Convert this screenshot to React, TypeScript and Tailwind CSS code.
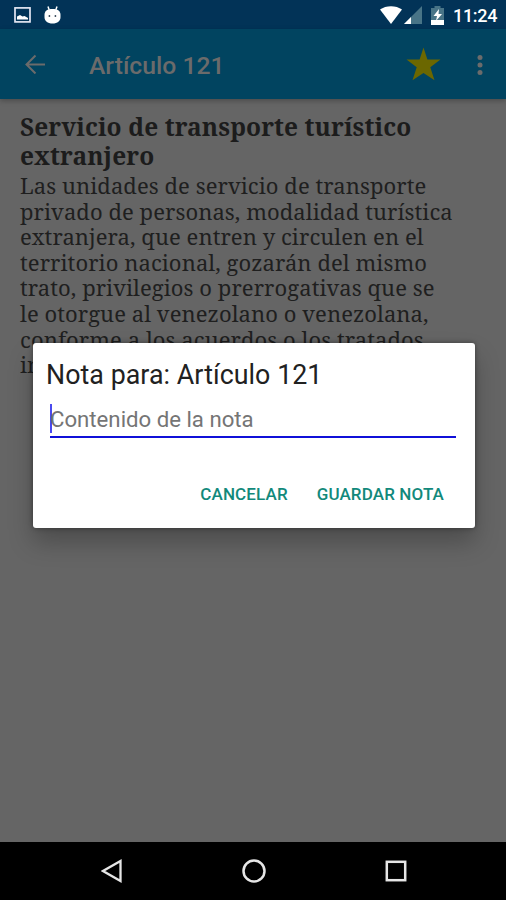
import React from "react";

const articleTitle = ["Servicio de transporte turístico", "extranjero"];

const articleLines = [
  "Las unidades de servicio de transporte",
  "privado de personas, modalidad turística",
  "extranjera, que entren y circulen en el",
  "territorio nacional, gozarán del mismo",
  "trato, privilegios o prerrogativas que se",
  "le otorgue al venezolano o venezolana,",
  "conforme a los acuerdos o los tratados",
  "internacionales.",
];

const StatusBar: React.FC = () => {
  return (
    <div className="flex h-[29px] shrink-0 items-center justify-between bg-[#023357] pl-[14px] pr-[9px] text-white">
      <div className="flex items-center gap-[13px]">
        <svg width="17" height="17" viewBox="0 0 17 17" fill="none">
          <rect x="1" y="1.9" width="15" height="14" stroke="#e3e6f2" strokeWidth="1.7" />
          <path d="M3 13.500V10.500l3-1.500 2.500 1.500 2-.5 3.500 2v1.500z" fill="#fff" />
        </svg>
        <svg width="17" height="18" viewBox="0 0 17 18">
          <path d="M4 0.500l1.200 3.500M13 0.500l-1.200 3.500" stroke="#fff" strokeWidth="1.500" />
          <path d="M0.500 9C0.500 5 3 3 8.500 3S16.500 5 16.500 9v2c0 4-3 6.500-8 6.500S0.500 15 0.500 11z" fill="#fff" />
          <circle cx="5.400" cy="10" r="0.900" fill="#345" />
          <circle cx="11.400" cy="10" r="0.900" fill="#345" />
        </svg>
      </div>
      <div className="flex items-center">
        <svg className="mt-[1px]" width="22" height="18" viewBox="0 0 22 18">
          <path d="M0 3.500C6-1 16-1 22 3.500L11 18z" fill="#fff" />
        </svg>
        <svg className="ml-[2px] mt-[1px]" width="18" height="18" viewBox="0 0 18 18">
          <path d="M18 0v18H0z" fill="#487487" />
          <path d="M7 11v7H0z" fill="#fff" />
        </svg>
        <svg className="ml-[9px] mt-[1px]" width="13" height="19" viewBox="0 0 13 19">
          <path d="M3.500 0h6v2H13v12H0V2h3.500z" fill="#487487" />
          <path d="M0 14h13v5H0z" fill="#fff" />
          <path d="M8 3L2.500 10H6l-1 5 6-7H7.500z" fill="#fff" />
        </svg>
        <span className="ml-[9px] mt-[2px] w-[44px] whitespace-nowrap text-[18px] font-medium leading-none tracking-[-0.300px]">
          11:24
        </span>
      </div>
    </div>
  );
};

const AppBar: React.FC = () => {
  return (
    <div className="flex h-[70px] shrink-0 items-center bg-[#014460] pl-[25px] pr-[23px] shadow-[0_2px_5px_rgba(0,0,0,0.25)]">
      <svg width="20" height="20" viewBox="0 0 20 20" fill="none" stroke="#6b6b6b" strokeWidth="2">
        <path d="M20 10.500H2M10.500 1.500L1.500 10.500l9 9" />
      </svg>
      <h1 className="ml-[44px] mt-[4px] text-[24.700px] font-medium leading-none text-[#6b6b6b]">
        Artículo 121
      </h1>
      <svg className="ml-auto" width="35" height="34" viewBox="0 0 35 34">
        <path
          d="M17.500 0.500l3.900 12H34.500L24.300 20.300l4.200 13L17.500 26l-11 7.300 4.200-13L0.500 12.500h13.100z"
          fill="#6b6700"
        />
      </svg>
      <svg className="ml-[36px] mt-[1px]" width="6" height="22" viewBox="0 0 6 22" fill="#6b6b6b">
        <circle cx="3" cy="3.400" r="2.500" />
        <circle cx="3" cy="10.900" r="2.500" />
        <circle cx="3" cy="18.400" r="2.500" />
      </svg>
    </div>
  );
};

const NoteDialog: React.FC = () => {
  return (
    <div className="absolute left-[33px] top-[343px] flex h-[185px] w-[442px] flex-col rounded-[3px] bg-white shadow-[0_14px_24px_rgba(0,0,0,0.25),0_0_5px_rgba(0,0,0,0.4)]">
      <h2 className="mt-[17px] pl-[13px] text-[26.800px] leading-[30px] tracking-[0.050px] text-[#212121]">
        Nota para: Artículo 121
      </h2>
      <div className="ml-[17px] mr-[19px] mt-[14px] flex h-[34px] items-start border-b-2 border-[#1010d8]">
        <div className="h-[29px] w-[2px] bg-[#4a4aef]" />
        <span className="-ml-[2px] text-[22.200px] leading-[31px] text-[#757575]">
          Contenido de la nota
        </span>
      </div>
      <div className="mr-[31px] mt-[46px] flex justify-end gap-[29px] text-[17px] font-medium leading-[20px] tracking-[0.120px] text-[#12897b]">
        <button>CANCELAR</button>
        <button>GUARDAR NOTA</button>
      </div>
    </div>
  );
};

const NavigationBar: React.FC = () => {
  return (
    <div className="flex h-[58px] shrink-0 items-center justify-between bg-black pl-[101px] pr-[99px]">
      <svg width="22" height="24" viewBox="0 0 22 24" fill="none" stroke="#e6e6e6" strokeWidth="2.300">
        <path d="M19.500 2v20L2 12z" />
      </svg>
      <svg width="24" height="24" viewBox="0 0 24 24" fill="none" stroke="#e6e6e6" strokeWidth="2.500">
        <circle cx="12" cy="12" r="10.500" />
      </svg>
      <svg width="22" height="22" viewBox="0 0 22 22" fill="none" stroke="#e6e6e6" strokeWidth="2.500">
        <rect x="1.800" y="1.800" width="18.400" height="18.400" />
      </svg>
    </div>
  );
};

const App: React.FC = () => {
  return (
    <div className="relative flex h-[900px] w-[506px] flex-col overflow-hidden bg-[#656565] font-[Roboto,sans-serif]">
      <StatusBar />
      <AppBar />
      <main className="flex-1 whitespace-nowrap pl-[20px] pt-[13px] font-['Noto_Serif','DejaVu_Serif_Condensed','DejaVu_Serif',serif]">
        <h2 className="text-[24.500px] font-bold leading-[29px] tracking-[0.080px] text-[#1c1c1c]">
          {articleTitle.map((line) => (
            <div key={line}>{line}</div>
          ))}
        </h2>
        <div className="mt-[3px] text-[22px] leading-[25.600px] tracking-[0.060px] text-[#1f1f1f]">
          {articleLines.map((line) => (
            <div key={line}>{line}</div>
          ))}
        </div>
      </main>
      <NavigationBar />
      <NoteDialog />
    </div>
  );
};

export default App;
